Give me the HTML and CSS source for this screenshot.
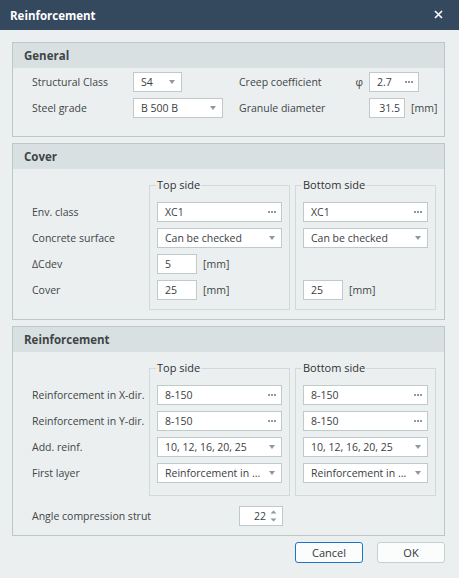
FILE: index.html
```html
<!DOCTYPE html>
<html>
<head>
<meta charset="utf-8">
<title>Reinforcement</title>
<link rel="stylesheet" href="styles.css">
</head>
<body>
<div class="dialog">
  <header class="titlebar">
    <span class="title">Reinforcement</span>
    <svg class="close" width="9" height="9" viewBox="0 0 9 9"><path d="M1 1 L8 8 M8 1 L1 8" stroke="#fff" stroke-width="1.6" fill="none"/></svg>
  </header>

  <div class="content">
    <section class="group">
      <div class="group-head">General</div>
      <div class="general-grid">
        <span class="lbl">Structural Class</span>
        <div class="field select w-s4"><span class="val">S4</span><i class="arrow"></i></div>
        <span class="lbl creep">Creep coefficient <span class="phi">φ</span></span>
        <div class="field dots w-creep"><span class="val">2.7</span><i class="ell"><b></b><b></b><b></b></i></div>

        <span class="lbl">Steel grade</span>
        <div class="field select w-steel"><span class="val">B 500 B</span><i class="arrow"></i></div>
        <span class="lbl">Granule diameter</span>
        <div class="unit-row"><div class="field w-gran"><span class="val right">31.5</span></div><span class="unit">[mm]</span></div>
      </div>
    </section>

    <section class="group">
      <div class="group-head">Cover</div>
      <div class="side-grid cover">
        <div class="labels">
          <span class="lbl">Env. class</span>
          <span class="lbl">Concrete surface</span>
          <span class="lbl">ΔCdev</span>
          <span class="lbl">Cover</span>
        </div>
        <fieldset class="side">
          <legend>Top side</legend>
          <div class="field dots"><span class="val">XC1</span><i class="ell"><b></b><b></b><b></b></i></div>
          <div class="field select"><span class="val">Can be checked</span><i class="arrow"></i></div>
          <div class="unit-row"><div class="field w-small"><span class="val">5</span></div><span class="unit">[mm]</span></div>
          <div class="unit-row"><div class="field w-small"><span class="val">25</span></div><span class="unit">[mm]</span></div>
        </fieldset>
        <fieldset class="side">
          <legend>Bottom side</legend>
          <div class="field dots"><span class="val">XC1</span><i class="ell"><b></b><b></b><b></b></i></div>
          <div class="field select"><span class="val">Can be checked</span><i class="arrow"></i></div>
          <div class="empty-row"></div>
          <div class="unit-row"><div class="field w-small"><span class="val">25</span></div><span class="unit">[mm]</span></div>
        </fieldset>
      </div>
    </section>

    <section class="group">
      <div class="group-head">Reinforcement</div>
      <div class="side-grid reinf">
        <div class="labels">
          <span class="lbl">Reinforcement in X-dir.</span>
          <span class="lbl">Reinforcement in Y-dir.</span>
          <span class="lbl">Add. reinf.</span>
          <span class="lbl">First layer</span>
        </div>
        <fieldset class="side">
          <legend>Top side</legend>
          <div class="field dots"><span class="val">8-150</span><i class="ell"><b></b><b></b><b></b></i></div>
          <div class="field dots"><span class="val">8-150</span><i class="ell"><b></b><b></b><b></b></i></div>
          <div class="field select"><span class="val">10, 12, 16, 20, 25</span><i class="arrow"></i></div>
          <div class="field select"><span class="val">Reinforcement in ...</span><i class="arrow"></i></div>
        </fieldset>
        <fieldset class="side">
          <legend>Bottom side</legend>
          <div class="field dots"><span class="val">8-150</span><i class="ell"><b></b><b></b><b></b></i></div>
          <div class="field dots"><span class="val">8-150</span><i class="ell"><b></b><b></b><b></b></i></div>
          <div class="field select"><span class="val">10, 12, 16, 20, 25</span><i class="arrow"></i></div>
          <div class="field select"><span class="val">Reinforcement in ...</span><i class="arrow"></i></div>
        </fieldset>
        <div class="angle-row">
          <span class="lbl angle-lbl">Angle compression strut</span>
          <div class="field spin"><span class="val right">22</span>
            <span class="spin-btns">
              <svg width="7" height="4" viewBox="0 0 7 4"><path d="M0.5 3.5 L3.5 0.5 L6.5 3.5 Z" fill="#8d999c"/></svg>
              <svg width="7" height="4" viewBox="0 0 7 4"><path d="M0.5 0.5 L3.5 3.5 L6.5 0.5 Z" fill="#8d999c"/></svg>
            </span>
          </div>
        </div>
      </div>
    </section>

    <div class="buttons">
      <button class="btn primary">Cancel</button>
      <button class="btn">OK</button>
    </div>
  </div>
</div>
</body>
</html>
```
FILE: styles.css
```css
* { box-sizing: border-box; }

html, body {
  margin: 0;
  padding: 0;
  width: 459px;
  height: 578px;
  background: #ebeff0;
  font-family: "Open Sans", "Noto Sans", "Liberation Sans", sans-serif;
  font-size: 10.5px;
  color: #3e4344;
}

.dialog {
  width: 459px;
  height: 578px;
  background: #ebeff0;
}

.titlebar {
  height: 30px;
  background: #34485e;
  display: flex;
  align-items: center;
  justify-content: space-between;
  padding: 0 16px 0 10px;
}

.title {
  color: #ffffff;
  font-weight: 700;
  font-size: 11.5px;
  letter-spacing: 0;
}

.close { display: block; margin-top: -1px; }

.content {
  padding: 12px 14px 0 12px;
}

.group {
  border: 1px solid #bcc7c9;
  margin-bottom: 6px;
}

.group-head {
  height: 25px;
  background: #d9e0e2;
  font-weight: 700;
  font-size: 11.5px;
  color: #404546;
  display: flex;
  align-items: center;
  padding-left: 11px;
}

.lbl {
  display: flex;
  align-items: center;
  height: 20px;
  color: #414647;
  white-space: nowrap;
}

.general-grid {
  display: grid;
  grid-template-columns: 101px 106px 130px auto;
  grid-auto-rows: 20px;
  row-gap: 6px;
  padding: 4px 0 18px 19px;
  align-items: center;
}

.creep {
  justify-content: space-between;
  padding-right: 6px;
}
.phi { color: #414647; }

.field {
  height: 20px;
  background: #ffffff;
  border: 1px solid #bfcacc;
  display: flex;
  align-items: center;
  padding: 0 0 0 7px;
  color: #3a3e3f;
  position: relative;
  white-space: nowrap;
  overflow: hidden;
}

.val { flex: 1; }
.val.right { text-align: right; padding-right: 4px; }

.w-s4 { width: 49px; }
.w-steel { width: 90px; }
.w-creep { width: 50px; }
.w-gran { width: 36px; padding-left: 2px; }
.w-small { width: 40px; }

.arrow {
  width: 0;
  height: 0;
  border-left: 3.5px solid transparent;
  border-right: 3.5px solid transparent;
  border-top: 4px solid #8d999c;
  margin-right: 6px;
  flex: none;
}

.ell {
  display: flex;
  gap: 1px;
  margin-right: 5px;
  flex: none;
}
.ell b {
  width: 2px;
  height: 2px;
  background: #8d999c;
  display: block;
}

.unit-row {
  display: flex;
  align-items: center;
  gap: 6px;
  height: 20px;
}
.unit { color: #414647; }

.side-grid {
  display: grid;
  grid-template-columns: 112px 141px 141px;
  column-gap: 5px;
  padding: 9px 0 9px 19px;
}

.labels {
  display: flex;
  flex-direction: column;
  gap: 6px;
  padding-top: 24px;
}

.side {
  margin: 0;
  border: 1px solid #d2d9db;
  padding: 10px 7px 9px 7px;
  display: flex;
  flex-direction: column;
  gap: 6px;
  min-width: 0;
}

.side legend {
  padding: 0 1px;
  margin-left: -1px;
  line-height: 14px;
  font-size: 11px;
  color: #2f3233;
}

.side .field { width: 125px; }
.side .field.w-small { width: 40px; }

.empty-row { height: 20px; }

.reinf .side { padding-bottom: 12px; }

.angle-row {
  grid-column: 1 / -1;
  display: flex;
  align-items: center;
  margin-top: 10px;
  padding-bottom: 0;
}

.angle-lbl { width: 207px; }

.field.spin {
  width: 44px;
  padding-left: 2px;
}
.spin-btns {
  display: flex;
  flex-direction: column;
  gap: 4px;
  margin-right: 5px;
}
.spin-btns svg { display: block; }

.buttons {
  display: flex;
  justify-content: flex-end;
  gap: 14px;
  margin-top: 2px;
  padding-right: 0;
}

.btn {
  width: 68px;
  height: 21px;
  font-family: inherit;
  font-size: 11px;
  color: #333738;
  background: #fbfcfc;
  border: 1px solid #c6cfd1;
  border-radius: 3px;
  padding: 0;
}
.btn.primary {
  border-color: #1c74c9;
}
```
